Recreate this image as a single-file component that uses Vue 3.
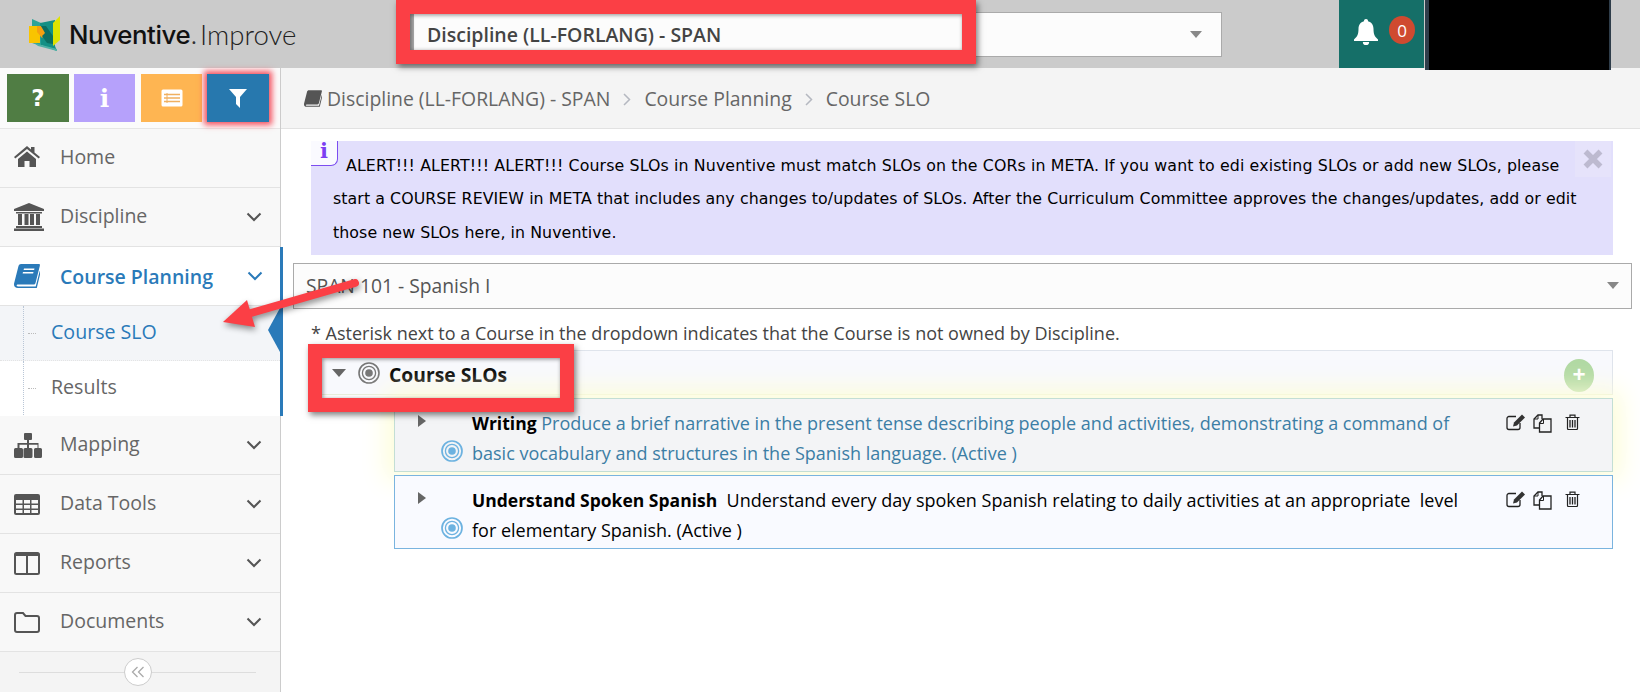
<script setup>
const menuTop = [
  { label: 'Home', icon: 'home', chevron: false },
  { label: 'Discipline', icon: 'bank', chevron: true }
]
const menuBottom = [
  { label: 'Mapping', icon: 'sitemap' },
  { label: 'Data Tools', icon: 'table' },
  { label: 'Reports', icon: 'columns' },
  { label: 'Documents', icon: 'folder' }
]
const slos = [
  {
    title: 'Writing',
    text: ' Produce a brief narrative in the present tense describing people and activities, demonstrating a command of basic vocabulary and structures in the Spanish language. (Active )',
    active: true
  },
  {
    title: 'Understand Spoken Spanish',
    text: '\u00a0 Understand every day spoken Spanish relating to daily activities at an appropriate\u00a0 level for elementary Spanish. (Active )',
    active: false
  }
]
</script>

<template>
  <div class="page">
    <header class="top">
      <div class="logo">
        <svg class="logo-mark" width="32" height="36" viewBox="0 0 32 36">
          <polygon points="3,3 12,7 12,30 3,27" fill="#2ea398" />
          <polygon points="11,7 26,4 26,30 28,35 12,29" fill="#149085" />
          <polygon points="5,27 28,33 28,35 9,30" fill="#4fb0a5" />
          <polygon points="0,10 11,10 11,27 0,27" fill="#f9c400" />
          <polygon points="8,10 12,10 17,17 13,22 8,16" fill="#f5a00f" />
          <polygon points="12,10 17,10 24,20 24,28 18,27 13,20 16,17" fill="#0b6e62" />
          <polygon points="24,7 31,0 31,24 24,30" fill="#dfe300" />
        </svg>
        <span class="logo-a">Nuventive<i>.</i></span><span class="logo-b">Improve</span>
      </div>
      <div class="discipline-select">
        <span>Discipline (LL-FORLANG) - SPAN</span>
        <b class="arrow-down"></b>
      </div>
      <div class="bell-box">
        <svg width="24" height="26" viewBox="0 0 24 26">
          <path fill="#fff" d="M12 0a2 2 0 0 1 2 2.2c3.600.8 5.500 3.800 5.500 7.600 0 5.200 1 7.800 4.500 10.700v1.500H0v-1.500c3.500-2.900 4.500-5.500 4.500-10.700 0-3.800 1.900-6.800 5.500-7.600A2 2 0 0 1 12 0zM8.800 23h6.400a3.200 3.200 0 0 1-6.400 0z" />
        </svg>
        <span class="badge">0</span>
      </div>
      <div class="account"></div>
    </header>

    <div class="body">
      <aside class="side">
        <div class="tool-row">
          <button class="tool green">?</button>
          <button class="tool purple">i</button>
          <button class="tool orange">
            <svg width="22" height="18" viewBox="0 0 22 18">
              <rect x="0.500" y="0.500" width="21" height="17" rx="1.500" fill="#fff" />
              <path d="M3 5.500h16M3 9h16M3 12.500h16" stroke="#f0b060" stroke-width="1.500" />
              <path d="M6 4v10" stroke="#f0b060" stroke-width="1" />
            </svg>
          </button>
          <button class="tool blue">
            <svg width="18" height="19" viewBox="0 0 18 19"><path fill="#fff" d="M0 0h18l-7 8v11l-4-4V8z" /></svg>
          </button>
        </div>

        <a v-for="m in menuTop" :key="m.label" class="item">
          <span class="ico">
            <svg v-if="m.icon === 'home'" class="home-ico" width="26" height="21" viewBox="0 0 26 21">
              <path fill="#555" d="M13 0l4 3.500V1h3.500v5.500L26 11l-1.300 1.500L13 3 1.300 12.500 0 11zM4 13l9-7.500L22 13v8h-6.500v-6h-5v6H4z" />
            </svg>
            <svg v-else width="30" height="28" viewBox="0 0 30 28">
              <path fill="#555" d="M15 0l15 6v2H0V6zM2 9h26v1.500H2zM4 11h4v11H4zM10.500 11h4v11h-4zM16 11h4v11h-4zM22 11h4v11h-4zM2 23h26v2H2zM0 25.500h30V28H0z" />
            </svg>
          </span>
          <span class="label">{{ m.label }}</span>
          <svg v-if="m.chevron" class="chev" width="16" height="10" viewBox="0 0 16 10"><path d="M1.500 1.500L8 8l6.500-6.500" fill="none" stroke="#555" stroke-width="2" /></svg>
        </a>

        <div class="group">
          <a class="item open">
            <span class="ico">
              <svg width="26" height="24" viewBox="0 0 26 24">
                <path fill="#2a7ab9" d="M7 0h18c1 0 1 1 .800 2l-4.300 17c-.3 1-1 1.500-2 1.500H4c-1 0-1.500.5-1.300 1.200.2.600.8.800 1.500.8h17.500l4-15.500 1 .7L22.800 24H4C1.500 24 0 22.500 0 20.500c0-.5 0-1 .2-1.500L4.500 2C4.800.8 5.800 0 7 0z" />
                <path fill="#fff" d="M10 4.500h10.500l-.4 1.500H9.600zM9 8h10.500l-.4 1.500H8.600z" />
              </svg>
            </span>
            <span class="label">Course Planning</span>
            <svg class="chev" width="16" height="10" viewBox="0 0 16 10"><path d="M1.500 1.500L8 8l6.500-6.500" fill="none" stroke="#2a7ab9" stroke-width="2" /></svg>
          </a>
          <a class="sub current"><span>Course SLO</span><span class="pointer"></span></a>
          <a class="sub"><span>Results</span></a>
        </div>

        <a v-for="m in menuBottom" :key="m.label" class="item">
          <span class="ico">
            <svg v-if="m.icon === 'sitemap'" width="28" height="25" viewBox="0 0 28 25">
              <path fill="#555" d="M11 0h6a1 1 0 0 1 1 1v5a1 1 0 0 1-1 1h-2v3h9.500v5h2a1.500 1.500 0 0 1 1.500 1.500v7a1.500 1.500 0 0 1-1.500 1.500h-5a1.500 1.500 0 0 1-1.500-1.500v-7a1.500 1.500 0 0 1 1.500-1.500h2v-3.200H15V15h2a1.500 1.500 0 0 1 1.500 1.500v7A1.500 1.500 0 0 1 17 25h-6a1.500 1.500 0 0 1-1.500-1.500v-7A1.500 1.500 0 0 1 11 15h2v-3.200H5.500V15h2A1.500 1.500 0 0 1 9 16.500v7A1.500 1.500 0 0 1 7.500 25h-6A1.500 1.500 0 0 1 0 23.500v-7A1.500 1.500 0 0 1 1.500 15h2v-5H13V7h-2a1 1 0 0 1-1-1V1a1 1 0 0 1 1-1z" />
            </svg>
            <svg v-else-if="m.icon === 'table'" width="26" height="21" viewBox="0 0 26 21">
              <rect x="0" y="0" width="26" height="21" rx="2" fill="#555" />
              <path fill="#f8f8f8" d="M2 6h6.500v3.500H2zM10 6h6v3.500h-6zM17.500 6H24v3.500h-6.500zM2 11h6.500v3.500H2zM10 11h6v3.500h-6zM17.500 11H24v3.500h-6.500zM2 16h6.500v3H2zM10 16h6v3h-6zM17.500 16H24v3h-6.500z" />
            </svg>
            <svg v-else-if="m.icon === 'columns'" width="26" height="23" viewBox="0 0 26 23">
              <rect x="1" y="1" width="24" height="21" rx="1.500" fill="none" stroke="#555" stroke-width="2" />
              <rect x="1" y="1" width="24" height="3" fill="#555" />
              <path d="M13 2v20" stroke="#555" stroke-width="2" />
            </svg>
            <svg v-else width="26" height="21" viewBox="0 0 26 21">
              <path fill="none" stroke="#555" stroke-width="2" d="M3 1h6l2.500 3H23a2 2 0 0 1 2 2v12a2 2 0 0 1-2 2H3a2 2 0 0 1-2-2V3a2 2 0 0 1 2-2z" />
            </svg>
          </span>
          <span class="label">{{ m.label }}</span>
          <svg class="chev" width="16" height="10" viewBox="0 0 16 10"><path d="M1.500 1.500L8 8l6.500-6.500" fill="none" stroke="#555" stroke-width="2" /></svg>
        </a>

        <div class="collapse">
          <span class="collapse-btn">
            <svg width="14" height="12" viewBox="0 0 14 12"><path d="M6.500 1L1.500 6l5 5M12.500 1l-5 5 5 5" fill="none" stroke="#aaa" stroke-width="1.300" /></svg>
          </span>
        </div>
      </aside>

      <main class="main">
        <nav class="crumbs">
          <svg class="crumb-book" width="18" height="17" viewBox="0 0 26 24">
            <path fill="#555" d="M7 0h18c1 0 1 1 .800 2l-4.300 17c-.3 1-1 1.500-2 1.500H4c-1 0-1.500.5-1.300 1.200.2.600.8.800 1.500.8h17.500l4-15.500 1 .7L22.800 24H4C1.500 24 0 22.500 0 20.500c0-.5 0-1 .2-1.500L4.500 2C4.800.8 5.800 0 7 0z" />
          </svg>
          <span>Discipline (LL-FORLANG) - SPAN</span>
          <svg class="sep" width="8" height="13" viewBox="0 0 8 13"><path d="M1 1l5.500 5.500L1 12" fill="none" stroke="#b5b8c0" stroke-width="1.500" /></svg>
          <span>Course Planning</span>
          <svg class="sep" width="8" height="13" viewBox="0 0 8 13"><path d="M1 1l5.500 5.500L1 12" fill="none" stroke="#b5b8c0" stroke-width="1.500" /></svg>
          <span>Course SLO</span>
        </nav>

        <div class="content">
          <div class="alert">
            <span class="alert-tab">i</span>
            <span class="alert-x">
              <svg width="22" height="22" viewBox="0 0 22 22"><path d="M3.500 3.500l15 15M18.500 3.500l-15 15" stroke="#bdbad0" stroke-width="5.500" /></svg>
            </span>
            <p>
              <span class="line l1">ALERT!!! ALERT!!! ALERT!!! Course SLOs in Nuventive must match SLOs on the CORs in META. If you want to edi existing SLOs or add new SLOs, please</span>
              <span class="line l2">start a COURSE REVIEW in META that includes any changes to/updates of SLOs. After the Curriculum Committee approves the changes/updates, add or edit</span>
              <span class="line l3">those new SLOs here, in Nuventive.</span>
            </p>
          </div>

          <div class="course-select">
            <span>SPAN 101 - Spanish I</span>
            <b class="arrow-down"></b>
          </div>

          <p class="note">* Asterisk next to a Course in the dropdown indicates that the Course is not owned by Discipline.</p>

          <section class="panel">
            <div class="panel-head">
              <b class="caret-down"></b>
              <svg class="target" width="22" height="22" viewBox="0 0 22 22">
                <circle cx="11" cy="11" r="10" fill="none" stroke="#777" stroke-width="1.600" />
                <circle cx="11" cy="11" r="6.600" fill="none" stroke="#777" stroke-width="1.300" />
                <circle cx="11" cy="11" r="3.800" fill="#777" />
              </svg>
              <strong>Course SLOs</strong>
              <span class="plus">+</span>
            </div>
            <div class="rows">
              <article v-for="s in slos" :key="s.title" class="row" :class="{ active: s.active }">
                <div class="row-left">
                  <b class="caret-right"></b>
                  <svg class="target" width="22" height="22" viewBox="0 0 22 22">
                    <circle cx="11" cy="11" r="10" fill="none" stroke="#6cb2e0" stroke-width="1.700" />
                    <circle cx="11" cy="11" r="6.600" fill="none" stroke="#6cb2e0" stroke-width="1.300" />
                    <circle cx="11" cy="11" r="3.800" fill="#6cb2e0" />
                  </svg>
                </div>
                <p class="row-text"><strong>{{ s.title }}</strong><span>{{ s.text }}</span></p>
                <div class="row-actions">
                  <svg width="20" height="17" viewBox="0 0 20 17">
                    <path d="M10 2.500H3A2 2 0 0 0 1 4.500v9a2 2 0 0 0 2 2h9a2 2 0 0 0 2-2V9" fill="none" stroke="#222" stroke-width="1.300" />
                    <path fill="#333" d="M16 0.500l3 3-8 8-4 1 1-4z" />
                  </svg>
                  <svg width="19" height="19" viewBox="0 0 19 19">
                    <path d="M9 5V1H5L1 5v9h5" fill="none" stroke="#222" stroke-width="1.300" />
                    <path d="M5 1v4H1" fill="none" stroke="#222" stroke-width="1" />
                    <path d="M14 5H10L6.500 9v9H18V5z" fill="none" stroke="#222" stroke-width="1.300" />
                    <path d="M10.500 5v4.500h-4" fill="none" stroke="#222" stroke-width="1" />
                  </svg>
                  <svg class="trash" width="15" height="16" viewBox="0 0 15 16">
                    <path d="M2.500 4v10.500a1 1 0 0 0 1 1h8a1 1 0 0 0 1-1V4M0.500 3.500h14M5 3V1.200h5V3" fill="none" stroke="#222" stroke-width="1.200" />
                    <path d="M5 6v7.500M7.500 6v7.500M10 6v7.500" stroke="#222" stroke-width="1.300" />
                  </svg>
                </div>
              </article>
            </div>
          </section>
        </div>
      </main>
    </div>

    <div class="mark mark-select"></div>
    <div class="mark mark-slos"></div>
    <svg class="mark-arrow" width="150" height="60" viewBox="0 0 150 60">
      <path d="M141 8L37 38" stroke="#fb3f45" stroke-width="8" stroke-linecap="round" />
      <polygon points="9,47 33,25 41,52" fill="#fb3f45" />
    </svg>
  </div>
</template>

<style>
html, body { margin: 0; background: #fff; }
</style>

<style scoped>
.page { position: relative; width: 1640px; height: 692px; overflow: hidden; font-family: "Open Sans", sans-serif; color: #555; display: flex; flex-direction: column; }
.top { height: 68px; flex: none; background: #cbcbcb; display: flex; align-items: center; }
.logo { display: flex; align-items: center; width: 410px; flex: none; padding-left: 29px; box-sizing: border-box; }
.logo-mark { margin-right: 8px; flex: none; }
.logo-a { font-family: Inter, sans-serif; font-weight: 500; font-size: 25.800px; letter-spacing: -0.4px; color: #111; }
.logo-a i { font-style: normal; font-weight: 300; color: #333; }
.logo-b { font-family: Lato, sans-serif; font-weight: 300; font-size: 27.600px; color: #222; margin-left: 3px; }
.discipline-select { width: 812px; height: 45px; flex: none; box-sizing: border-box; background: #fcfcfc; border: 1px solid #aaa; border-left-width: 4px; display: flex; align-items: center; justify-content: space-between; padding: 0 19px 0 13px; font-weight: 600; font-size: 19.500px; color: #444; }
.arrow-down { width: 0; height: 0; border-left: 6.500px solid transparent; border-right: 6.500px solid transparent; border-top: 7px solid #888; }
.bell-box { margin-left: 117px; width: 85px; height: 68px; flex: none; box-sizing: border-box; background: #156f68; display: flex; align-items: center; padding-left: 15px; gap: 11px; color: #fff; }
.bell-box svg { margin-top: -4px; }
.badge { width: 26px; height: 28px; border-radius: 50%; background: #cf4a30; color: #fff; display: flex; align-items: center; justify-content: center; font-size: 17px; margin-top: -8px; }
.account { margin-left: 1px; width: 186px; height: 70px; flex: none; align-self: flex-start; box-sizing: border-box; background: #000; border-left: 4px solid #2f3d4a; border-right: 2px solid #2f3d4a; position: relative; z-index: 3; }

.body { flex: 1; display: flex; min-height: 0; }
.side { width: 281px; flex: none; box-sizing: border-box; background: #f8f8f8; border-right: 1px solid #ccc; display: flex; flex-direction: column; }
.tool-row { height: 61px; flex: none; box-sizing: border-box; padding: 6px 0 0 7px; display: flex; background: #fbfbfb; border-bottom: 1px solid #e6e6e6; }
.tool { height: 48px; border: 0; padding: 0; display: flex; align-items: center; justify-content: center; color: #fff; font-weight: 800; flex: none; }
.green { width: 62px; background: #507d44; font-size: 23px; font-family: "DejaVu Sans", sans-serif; font-weight: 700; }
.purple { width: 61px; background: #b6a1fb; margin-left: 5px; font-family: "DejaVu Serif", serif; font-weight: 700; font-size: 25px; }
.orange { width: 61px; background: #feb552; margin-left: 6px; }
.blue { width: 62px; background: #2778ae; margin-left: 5px; box-shadow: 0 0 6px 3px #f4505e; }

.item { height: 59px; flex: none; box-sizing: border-box; display: flex; align-items: center; padding: 0 18px 0 14px; border-bottom: 1px solid #e3e3e3; font-size: 19.500px; color: #666; }
.ico { width: 46px; flex: none; display: flex; align-items: center; justify-content: flex-start; }
.home-ico { margin-top: -4px; }
.label { flex: 1; padding-bottom: 4px; }
.group { flex: none; height: 169px; background: #fff; margin-right: -3px; border-right: 3px solid #2a7ab9; border-bottom: 0; position: relative; z-index: 1; }
.item.open { background: #fff; color: #2a7ab9; font-weight: 600; padding-right: 17px; }
.item.open .label { padding-bottom: 0; }
.sub { display: flex; align-items: center; height: 54px; box-sizing: border-box; padding: 0 0 4px 51px; font-size: 19.600px; color: #666; position: relative; background: #fff; }
.sub::before { content: ""; position: absolute; left: 23px; top: 0; bottom: 0; border-left: 1px dotted #b9c6d6; }
.sub::after { content: ""; position: absolute; left: 28px; width: 8px; top: 50%; border-top: 1px dotted #bbb; }
.sub.current { background: #f3f5f8; color: #2a7ab9; height: 55px; padding-bottom: 3px; border-bottom: 1px dotted #e4e4e4; }
.pointer { position: absolute; right: 0; top: 2px; width: 0; height: 0; border-top: 22px solid transparent; border-bottom: 22px solid transparent; border-right: 12px solid #2a7ab9; }
.collapse { flex: 1; background: #f4f4f4; position: relative; display: flex; align-items: center; justify-content: center; }
.collapse::before { content: ""; position: absolute; left: 19px; right: 24px; top: 20px; border-top: 1px solid #ddd; }
.collapse-btn { position: relative; margin-right: 5px; width: 28px; height: 28px; box-sizing: border-box; border: 1px solid #ccc; border-radius: 50%; background: #fff; display: flex; align-items: center; justify-content: center; }

.main { flex: 1; min-width: 0; display: flex; flex-direction: column; }
.crumbs { height: 61px; flex: none; box-sizing: border-box; background: #f4f4f4; border-bottom: 1px solid #e2e2e2; display: flex; align-items: center; padding-left: 23px; font-size: 19.400px; color: #666; }
.crumb-book { margin-right: 5px; }
.sep { margin: 2px 13px 0; }
.content { padding: 12px 8px 0 12px; flex: 1; }
.alert { position: relative; margin: 0 19px 0 18px; height: 114px; box-sizing: border-box; background: #e2dffc; padding: 8px 23px 0 22px; }
.alert p { margin: 0; font-family: Tahoma, "DejaVu Sans", sans-serif; font-size: 15.800px; line-height: 33.300px; color: #000; }
.line { display: block; white-space: nowrap; }
.l1 { padding-left: 13px; letter-spacing: 0.12px; }
.l2 { letter-spacing: 0.07px; }
.l3 { letter-spacing: 0.07px; }
.alert-tab { position: absolute; left: 0; top: 0; width: 27px; height: 25px; box-sizing: border-box; background: #fafaff; border-right: 1px solid #7c4df0; border-bottom: 1px solid #7c4df0; border-bottom-right-radius: 7px; color: #7c3ff2; font-family: "DejaVu Serif", serif; font-weight: 700; font-size: 21px; line-height: 20px; text-align: center; }
.alert-x { position: absolute; right: 2px; top: 0; width: 36px; height: 36px; background: #e6e3fb; display: flex; align-items: center; justify-content: center; }
.course-select { margin-top: 8px; height: 46px; box-sizing: border-box; background: #fcfcfc; border: 1px solid #aaa; display: flex; align-items: center; justify-content: space-between; padding: 0 12px 2px 12px; font-size: 19.300px; color: #555; }
.note { margin: 12px 0 0 18px; font-size: 18px; line-height: 24px; color: #444; }
.panel { margin: 5px 19px 0 18px; }
.panel-head { height: 45px; box-sizing: border-box; background: #f8f9fd; border: 1px solid #dfe4ec; border-bottom-color: #e8eedb; display: flex; align-items: center; padding: 0 18px 0 20px; position: relative; }
.panel-head strong { font-size: 19.300px; font-weight: 700; color: #000; margin: 3px 0 0 9px; }
.caret-down { width: 0; height: 0; border-left: 7px solid transparent; border-right: 7px solid transparent; border-top: 8px solid #666; margin-right: 12px; }
.plus { margin: 5px 0 0 auto; width: 30px; height: 33px; border-radius: 50%; background: #b1d9a3; color: #fff; font-size: 23px; font-weight: 700; line-height: 31px; text-align: center; }
.rows { margin: 3px 0 0 83px; display: flex; flex-direction: column; gap: 3px; }
.row { height: 74px; box-sizing: border-box; background: #f9faff; border: 1px solid #7ab4df; display: flex; position: relative; }
.row.active { background: #f3f4f6; border-color: #c3ded5; box-shadow: 0 0 24px 8px #fdfdd9; z-index: 0; }
.row-left { width: 77px; flex: none; position: relative; }
.caret-right { position: absolute; left: 23px; top: 16px; width: 0; height: 0; border-top: 6.500px solid transparent; border-bottom: 6.500px solid transparent; border-left: 8px solid #666; }
.row-left .target { position: absolute; left: 46px; top: 41px; }
.row-text { margin: 9px 0 0; width: 1000px; flex: none; font-size: 18px; line-height: 30px; color: #000; }
.row-text strong { font-weight: 700; font-size: 17.500px; }
.active .row-text span { color: #3c7ea5; }
.row-actions { margin: 15px 0 0 34px; display: flex; align-items: flex-start; gap: 7px; height: 20px; }
.trash { margin-left: 6px; }

.mark { position: absolute; box-sizing: border-box; border: 14px solid #fb3f45; box-shadow: 2px 3px 6px rgba(0,0,0,.5), inset 1px 1px 4px rgba(0,0,0,.45); pointer-events: none; z-index: 5; }
.mark-select { left: 396px; top: 0; width: 580px; height: 64px; }
.mark-slos { left: 308px; top: 344px; width: 266px; height: 68px; }
.mark-arrow { position: absolute; left: 214px; top: 275px; z-index: 5; filter: drop-shadow(1px 3px 3px rgba(0,0,0,.45)); }
</style>
